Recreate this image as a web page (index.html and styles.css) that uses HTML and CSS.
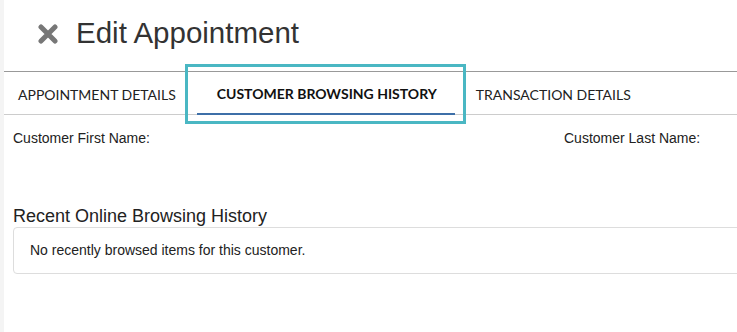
FILE: index.html
```html
<!DOCTYPE html>
<html lang="en">
<head>
    <meta charset="UTF-8">
    <meta name="viewport" content="width=device-width, initial-scale=1.0">
    <title>Edit Appointment</title>
    <link rel="stylesheet" href="styles.css">
</head>
<body>
    <div class="modal">
        <div class="modal-header">
            <svg class="close-icon" width="20" height="20" viewBox="0 0 20 20">
                <path d="M3 3 L17 17 M17 3 L3 17" stroke="#777" stroke-width="5" stroke-linecap="round"/>
            </svg>
            <h1>Edit Appointment</h1>
        </div>
        <div class="tabs">
            <div class="tab tab-first">APPOINTMENT DETAILS</div>
            <div class="tab active">CUSTOMER BROWSING HISTORY</div>
            <div class="tab tab-last">TRANSACTION DETAILS</div>
            <div class="highlight"></div>
        </div>
        <div class="content">
            <div class="fields">
                <div class="field">Customer First Name:</div>
                <div class="field">Customer Last Name:</div>
            </div>
            <h2>Recent Online Browsing History</h2>
            <div class="panel">No recently browsed items for this customer.</div>
        </div>
    </div>
</body>
</html>
```

FILE: styles.css
```css
body {
    margin: 0;
    background-color: #f4f4f4;
    font-family: "Liberation Sans", Arial, sans-serif;
    color: #333;
    overflow: hidden;
}
.modal {
    margin-left: 4px;
    background-color: #fff;
    height: 332px;
}
.modal-header {
    display: flex;
    align-items: center;
    gap: 18px;
    height: 71px;
    padding-left: 34px;
    border-bottom: 1px solid #999;
}
.close-icon {
    display: block;
    margin-top: -4px;
}
h1 {
    margin: 0;
    margin-top: -5px;
    font-size: 29.5px;
    font-weight: normal;
    color: #333;
}
.tabs {
    position: relative;
    display: flex;
    height: 42px;
    border-bottom: 1px solid #ccc;
    font-family: Lato, sans-serif;
    font-size: 14px;
    color: #222;
}
.tab {
    display: flex;
    align-items: center;
    padding: 2px 20px 0;
    margin-bottom: -1px;
}
.tab-first {
    padding-left: 14px;
    padding-right: 21px;
}
.tab-last {
    padding-left: 21px;
}
.tab.active {
    font-weight: bold;
    color: #111;
    border-bottom: 2px solid #3d6fa8;
    margin-bottom: 0;
    height: 39px;
    padding-right: 18px;
}
.highlight {
    position: absolute;
    left: 181px;
    top: -8px;
    width: 275px;
    height: 54px;
    border: 3px solid #4ab7c3;
}
.content {
    padding: 0 9px;
}
.fields {
    display: grid;
    grid-template-columns: 551px 1fr;
    padding-top: 15px;
    font-size: 14px;
    line-height: 16px;
    color: #222;
}
h2 {
    margin: 60px 0 0;
    font-size: 18px;
    line-height: 21px;
    font-weight: normal;
    color: #222;
}
.panel {
    margin-right: -20px;
    height: 47px;
    box-sizing: border-box;
    border: 1px solid #ddd;
    border-radius: 4px;
    padding: 14px 16px;
    font-size: 14px;
    line-height: 17px;
    color: #222;
}
```
